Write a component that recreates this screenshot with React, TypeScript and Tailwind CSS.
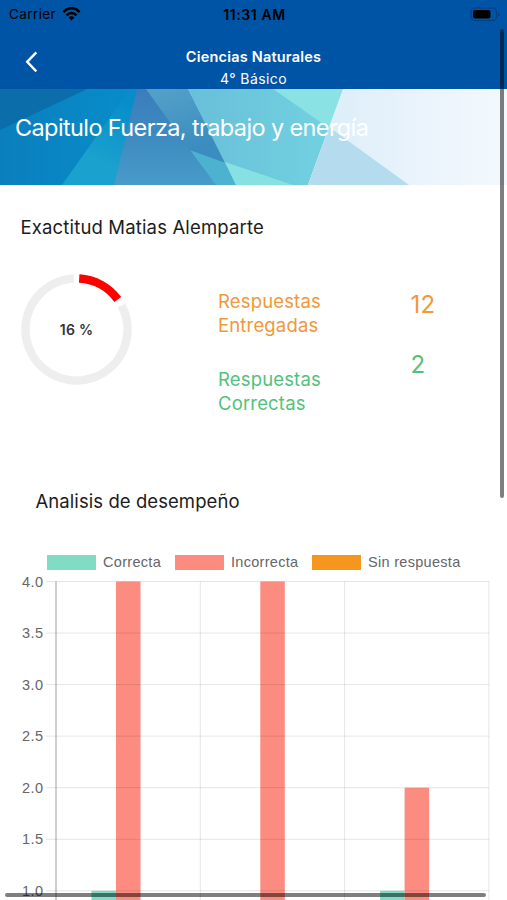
import clsx from "clsx";

const FONT = "font-['Inter','Liberation_Sans',sans-serif]";

const LEGEND = [
  { label: "Correcta", swatch: "bg-[#80dcc4]", width: "w-[59px]" },
  { label: "Incorrecta", swatch: "bg-[#fc8c7f]", width: "w-[68px]" },
  { label: "Sin respuesta", swatch: "bg-[#f6961e]", width: "w-[94px]" },
];

const TICKS = ["4.0", "3.5", "3.0", "2.5", "2.0", "1.5", "1.0"];
const TICK_STEP = 51.55;
const UNIT = TICK_STEP * 2;
const PLOT_TOP = 9.5;
const PLOT_LEFT = 56;
const GROUP_WIDTH = 144.3;
const BAR_WIDTH = 24.5;
const CHART_HEIGHT = 328;

const GROUPS = [
  { correct: 1, incorrect: 4 },
  { correct: 0, incorrect: 4 },
  { correct: 1, incorrect: 2 },
];

function arc(from: number, to: number) {
  const point = (deg: number) => {
    const a = (deg * Math.PI) / 180;
    return `${55.5 + 51 * Math.sin(a)} ${55.5 - 51 * Math.cos(a)}`;
  };
  return `M${point(from)} A51 51 0 ${to - from > 180 ? 1 : 0} 1 ${point(to)}`;
}

function StatusBar() {
  return (
    <div className="flex h-7 items-center justify-between pl-[9px] pr-[7px] text-black">
      <div className="flex w-[110px] items-center gap-[6px]">
        <span className="text-[13.5px] tracking-[0.4px]">Carrier</span>
        <svg width="19" height="14" viewBox="0 0 19 14" fill="none" stroke="currentColor" strokeWidth="2.6">
          <path d="M1.5 5.1C6-.1 13-.1 17.5 5.1" />
          <path d="M4.5 8.4C7.4 5.2 11.6 5.2 14.5 8.4" />
          <path d="M9.5 13.6 6.6 10.5C8.2 8.9 10.8 8.9 12.4 10.5Z" fill="currentColor" stroke="none" />
        </svg>
      </div>
      <span className="text-[14px] font-semibold tracking-[0.6px]">11:31 AM</span>
      <div className="flex w-[110px] justify-end">
        <svg width="30" height="15" viewBox="0 0 30 15">
          <rect x="1" y="1" width="25.5" height="12.5" rx="4" fill="none" stroke="#02407f" strokeWidth="1.2" />
          <rect x="3" y="3" width="17.5" height="8.5" rx="2" fill="#000" />
          <path d="M28 5v4.5c1.8-.6 1.8-3.9 0-4.5Z" fill="#02407f" />
        </svg>
      </div>
    </div>
  );
}

function Header() {
  return (
    <header className="h-[89px] bg-[#0054a6]">
      <StatusBar />
      <div className="flex h-[61px] items-start px-[25px] pt-[18px] text-white">
        <button type="button" aria-label="Volver" className="w-10 pt-[5px]">
          <svg width="14" height="22" viewBox="0 0 14 22" fill="none" stroke="currentColor" strokeWidth="2.4">
            <path d="M11.3 1.3 2.2 10.8l9.1 9.5" />
          </svg>
        </button>
        <div className="flex-1 text-center">
          <h1 className="text-[14.5px] font-semibold leading-[22px] tracking-[0.2px]">Ciencias Naturales</h1>
          <p className="text-[14px] leading-[22px] tracking-[0.4px]">4° Básico</p>
        </div>
        <div className="w-10" />
      </div>
    </header>
  );
}

function Banner() {
  return (
    <div className="relative h-24 overflow-hidden">
      <svg className="absolute inset-0" width="507" height="96" viewBox="0 0 507 96">
        <defs>
          <linearGradient id="sky" x1="0" x2="1">
            <stop offset="0" stopColor="#d9edf8" />
            <stop offset="0.6" stopColor="#ebf4fc" />
            <stop offset="1" stopColor="#f3f9fd" />
          </linearGradient>
          <linearGradient id="deep" x1="0" x2="1">
            <stop offset="0" stopColor="#0b7fbd" />
            <stop offset="1" stopColor="#078dca" />
          </linearGradient>
          <linearGradient id="cyan" x1="0.8" x2="0.4" y1="0" y2="1">
            <stop offset="0.1" stopColor="#078dca" />
            <stop offset="0.75" stopColor="#1ba1cd" />
          </linearGradient>
          <linearGradient id="violet" x1="0" x2="0" y1="0" y2="1">
            <stop offset="0" stopColor="#3b7dbb" />
            <stop offset="0.5" stopColor="#3d8bc0" />
            <stop offset="1" stopColor="#489bc9" />
          </linearGradient>
          <linearGradient id="steel" x1="0.3" x2="0.7" y1="0" y2="1">
            <stop offset="0" stopColor="#529fc8" />
            <stop offset="0.8" stopColor="#3b8dbf" />
          </linearGradient>
          <linearGradient id="teal" x1="0" x2="1">
            <stop offset="0" stopColor="#68bfd9" />
            <stop offset="1" stopColor="#73d3e1" />
          </linearGradient>
        </defs>
        <path d="M0 0H138V96H0Z" fill="url(#deep)" />
        <path d="M0 0H87L0 41Z" fill="#0b6eab" />
        <path d="M62 96 130 0H137L115 96Z" fill="url(#cyan)" />
        <path d="M137 0H188L236 96H114Z" fill="url(#violet)" />
        <path d="M190 61 226 74 236 96H216Z" fill="#4cb2d0" />
        <path d="M146 0H188L226 74 190 61Z" fill="url(#steel)" />
        <path d="M188 0H343L308 96H236Z" fill="url(#teal)" />
        <path d="M273 0H343L329 39Z" fill="#8be2e5" />
        <path d="M225 73 293 96H236Z" fill="#87e1e3" />
        <path d="M343 0H507V96H308Z" fill="url(#sky)" />
        <path d="M329 38 409 96H308Z" fill="#b5dcee" />
      </svg>
      <h2 className="relative pl-[15px] pt-[24px] text-[23.5px] leading-[30px] tracking-[-0.62px] text-white">
        Capitulo Fuerza, trabajo y energía
      </h2>
    </div>
  );
}

function Accuracy() {
  return (
    <section className="h-[297px] pt-[29px]">
      <h3 className="pl-[20.5px] text-[18.5px] leading-[27px] tracking-[0.16px] text-[#1c1c1e]">Exactitud Matias Alemparte</h3>
      <div className="flex pl-[21px] pt-[33px]">
        <div className="relative h-[111px] w-[111px]">
          <svg width="111" height="111" viewBox="0 0 111 111" fill="none" strokeWidth="8.5">
            <path d={arc(62, 357)} stroke="#eeeeee" />
            <path d={arc(3, 54)} stroke="#ff0000" />
          </svg>
          <span className="absolute inset-0 flex items-center justify-center text-[14px] font-semibold tracking-[0.3px] text-[#333]">16 %</span>
        </div>
        <div className="ml-[86px] w-[192.5px] pt-[15px] text-[18.5px] leading-[24px] tracking-[0.16px]">
          <p className="w-[110px] text-[#f0983a]">Respuestas Entregadas</p>
          <p className="mt-[30px] w-[110px] text-[#52c17c]">Respuestas Correctas</p>
        </div>
        <div className="pt-[16px] text-[24px] leading-[30px] tracking-[0.3px]">
          <p className="text-[#f0983a]">12</p>
          <p className="mt-[30px] text-[#52c17c]">2</p>
        </div>
      </div>
    </section>
  );
}

function Chart() {
  return (
    <svg width="507" height={CHART_HEIGHT} viewBox={`0 0 507 ${CHART_HEIGHT}`} className="block font-['Liberation_Sans',sans-serif]">
      {GROUPS.map((g, i) => {
        const x = PLOT_LEFT + i * GROUP_WIDTH + 35.5;
        const top = (value: number) => PLOT_TOP + (4 - value) * UNIT;
        return (
          <g key={i}>
            {g.correct > 0 && <rect x={x} y={top(g.correct)} width={BAR_WIDTH} height={CHART_HEIGHT} fill="#80dcc4" />}
            <rect x={x + BAR_WIDTH} y={top(g.incorrect)} width={BAR_WIDTH} height={CHART_HEIGHT} fill="#fc8c7f" />
          </g>
        );
      })}
      {TICKS.map((tick, i) => {
        const y = PLOT_TOP + i * TICK_STEP;
        return (
          <g key={tick}>
            <text x="22" y={y + 5} fontSize="14.5" letterSpacing="0.4" fill="#666">{tick}</text>
            <path d={`M46 ${y}H489`} stroke="#000" strokeOpacity="0.1" />
          </g>
        );
      })}
      {[1, 2, 3].map((i) => (
        <path key={i} d={`M${PLOT_LEFT + i * GROUP_WIDTH} ${PLOT_TOP}V${CHART_HEIGHT}`} stroke="#000" strokeOpacity="0.1" />
      ))}
      <path d={`M${PLOT_LEFT} ${PLOT_TOP}V${CHART_HEIGHT}`} stroke="#000" strokeOpacity="0.25" strokeWidth="1.5" />
    </svg>
  );
}

function Performance() {
  return (
    <section>
      <h3 className="pl-[35.5px] pt-[6px] text-[18.5px] leading-[26px] tracking-[0.07px] text-[#1c1c1e]">Analisis de desempeño</h3>
      <div className="flex gap-[13px] pl-[47px] pt-[38px] font-['Liberation_Sans',sans-serif]">
        {LEGEND.map((item) => (
          <div key={item.label} className="flex items-center gap-[7px]">
            <span className={clsx("h-[15px] w-[49px]", item.swatch)} />
            <span className={clsx("whitespace-nowrap text-[14.5px] leading-5 tracking-[0.3px] text-[#666]", item.width)}>{item.label}</span>
          </div>
        ))}
      </div>
      <Chart />
    </section>
  );
}

export default function App() {
  return (
    <div className={clsx("relative h-[900px] w-[507px] overflow-hidden bg-white", FONT)}>
      <Header />
      <Banner />
      <Accuracy />
      <Performance />
      {/* scroll indicators */}
      <div className="absolute right-[3px] top-[29px] h-[469px] w-1 rounded-full bg-black/50" />
      <div className="absolute bottom-[3.5px] left-[5px] h-1 w-[481px] rounded-full bg-black/50" />
    </div>
  );
}
